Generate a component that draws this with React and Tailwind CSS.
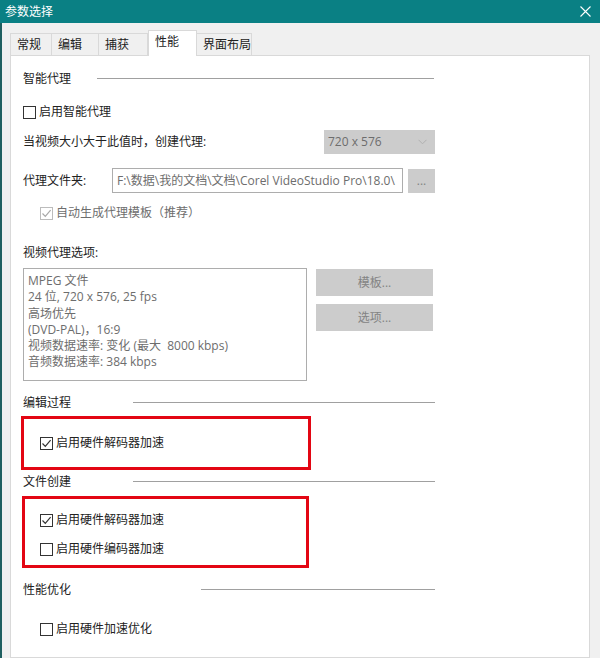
import React from 'react';

const FONT = { fontFamily: '"Open Sans", "Noto Sans CJK SC", sans-serif' };

// ── Checkbox ───────────────────────────────────────────────────────────────────
function Box({ checked, disabled }) {
  const stroke = disabled ? '#a8a8a8' : '#333333';
  return (
    <span
      className={`w-[13px] h-[13px] shrink-0 flex items-center justify-center border bg-white ${
        disabled ? 'border-[#bcbcbc]' : 'border-[#333333]'
      }`}
    >
      {checked && (
        <svg width="11" height="11" viewBox="0 0 11 11">
          <path d="M1.5 5.5 L4.3 8.3 L9.6 2.2" fill="none" stroke={stroke} strokeWidth="1.2" />
        </svg>
      )}
    </span>
  );
}

function Check({ label, checked, disabled, className = '' }) {
  return (
    <div className={`h-[20px] flex items-center gap-[3px] ${className}`}>
      <Box checked={checked} disabled={disabled} />
      <span className={disabled ? 'text-[#6d6d6d]' : 'text-[#222222]'}>{label}</span>
    </div>
  );
}

// ── Section header ─────────────────────────────────────────────────────────────
function Section({ label, labelWidth, lineWidth, className = '' }) {
  return (
    <div className={`h-[20px] flex items-center ${className}`}>
      <span className="text-[#222222] shrink-0" style={{ width: labelWidth }}>
        {label}
      </span>
      <span className="h-px bg-[#a0a0a0] -mt-[2px]" style={{ width: lineWidth }} />
    </div>
  );
}

const tabs = [
  { name: '常规', w: 'w-[42px]' },
  { name: '编辑', w: 'w-[48px]' },
  { name: '捕获', w: 'w-[50px]' },
  { name: '性能', w: 'w-[49px]', active: true },
  { name: '界面布局', w: 'w-[56px]' },
];

const proxyInfo = [
  'MPEG 文件',
  '24 位, 720 x 576, 25 fps',
  '高场优先',
  '(DVD-PAL)，16:9',
  '视频数据速率: 变化 (最大  8000 kbps)',
  '音频数据速率: 384 kbps',
];

export default function App() {
  return (
    <div className="w-[600px] h-[658px] overflow-hidden flex flex-col bg-[#f0f0f0] text-[12px]" style={FONT}>
      {/* Title bar */}
      <div className="h-[23px] shrink-0 bg-[#0a8084] flex items-center justify-between pl-[5px] pr-[9px]">
        <span className="text-white text-[12px]">参数选择</span>
        <svg width="11" height="11" viewBox="0 0 11 11">
          <path d="M0.5 0.5 L10.5 10.5 M10.5 0.5 L0.5 10.5" stroke="#ffffff" strokeWidth="1.1" />
        </svg>
      </div>

      <div className="flex-1 flex flex-col border-l-2 border-[#1f5f60] pl-[8px] pr-[10px] pt-[8px] min-h-0">
        {/* Tabs */}
        <div className="h-[25px] shrink-0 flex items-end relative z-10 -mb-px">
          {tabs.map((t) =>
            t.active ? (
              <div
                key={t.name}
                className={`${t.w} h-[26px] bg-white border border-b-0 border-[#d9d9d9] flex items-center pl-[6px] pb-[3px] text-[#222222]`}
              >
                {t.name}
              </div>
            ) : (
              <div
                key={t.name}
                className={`${t.w} h-[23px] bg-[#f0f0f0] border border-[#d9d9d9] -ml-px first:ml-0 flex items-center pl-[6px] text-[#222222]`}
              >
                {t.name}
              </div>
            )
          )}
        </div>

        {/* Panel */}
        <div className="flex-1 bg-white border border-[#d9d9d9] pl-[12px] flex flex-col">
          <Section label="智能代理" labelWidth={74} lineWidth={337} className="mt-[13px]" />
          <Check label="启用智能代理" className="mt-[13px]" />

          <div className="mt-[8px] h-[24px] flex items-center">
            <span className="w-[301px] text-[#222222]">当视频大小大于此值时，创建代理:</span>
            <div className="w-[111px] h-[24px] bg-[#cccccc] flex items-center justify-between pl-[4px] pr-[8px] text-[#6d6d6d]">
              <span>720 x 576</span>
              <svg width="9" height="6" viewBox="0 0 9 6">
                <path d="M0.5 0.8 L4.5 4.8 L8.5 0.8" fill="none" stroke="#b0b0b0" strokeWidth="1" />
              </svg>
            </div>
          </div>

          <div className="mt-[14px] h-[25px] flex items-center">
            <span className="w-[89px] text-[#222222]">代理文件夹:</span>
            <div className="w-[291px] h-[25px] border border-[#adadad] bg-white flex items-center pl-[4px] overflow-hidden whitespace-nowrap text-[#6d6d6d]">
              F:\数据\我的文档\文档\Corel VideoStudio Pro\18.0\
            </div>
            <div className="ml-[5px] w-[27px] h-[24px] bg-[#cccccc] flex items-center justify-center text-[#838383]">
              ...
            </div>
          </div>

          <Check label="自动生成代理模板（推荐）" checked disabled className="mt-[10px] ml-[17px]" />

          <div className="mt-[20px] h-[20px] flex items-center text-[#222222]">视频代理选项:</div>

          <div className="mt-[5px] flex items-start">
            <div className="w-[284px] h-[113px] border border-[#adadad] bg-white pl-[4px] pt-[4px] text-[#6d6d6d] leading-[16.3px]">
              {proxyInfo.map((l) => (
                <div key={l} className="whitespace-pre">{l}</div>
              ))}
            </div>
            <div className="ml-[9px] flex flex-col gap-[8px] pt-px">
              <div className="w-[117px] h-[27px] bg-[#cccccc] flex items-center justify-center text-[#838383]">模板...</div>
              <div className="w-[117px] h-[27px] bg-[#cccccc] flex items-center justify-center text-[#838383]">选项...</div>
            </div>
          </div>

          <Section label="编辑过程" labelWidth={110} lineWidth={302} className="mt-[12px]" />
          <div className="mt-[3px] -ml-[2px] w-[290px] h-[54px] border-[3px] border-[#e30613] pl-[16px] flex items-center">
            <Check label="启用硬件解码器加速" checked />
          </div>

          <Section label="文件创建" labelWidth={110} lineWidth={302} className="mt-[2px]" />
          <div className="mt-[4px] -ml-px w-[287px] h-[72px] border-[3px] border-[#e30613] pl-[15px] pt-[11px] flex flex-col gap-[9px]">
            <Check label="启用硬件解码器加速" checked />
            <Check label="启用硬件编码器加速" />
          </div>

          <Section label="性能优化" labelWidth={178} lineWidth={234} className="mt-[12px]" />
          <Check label="启用硬件加速优化" className="mt-[19px] ml-[17px]" />
        </div>
      </div>
    </div>
  );
}
